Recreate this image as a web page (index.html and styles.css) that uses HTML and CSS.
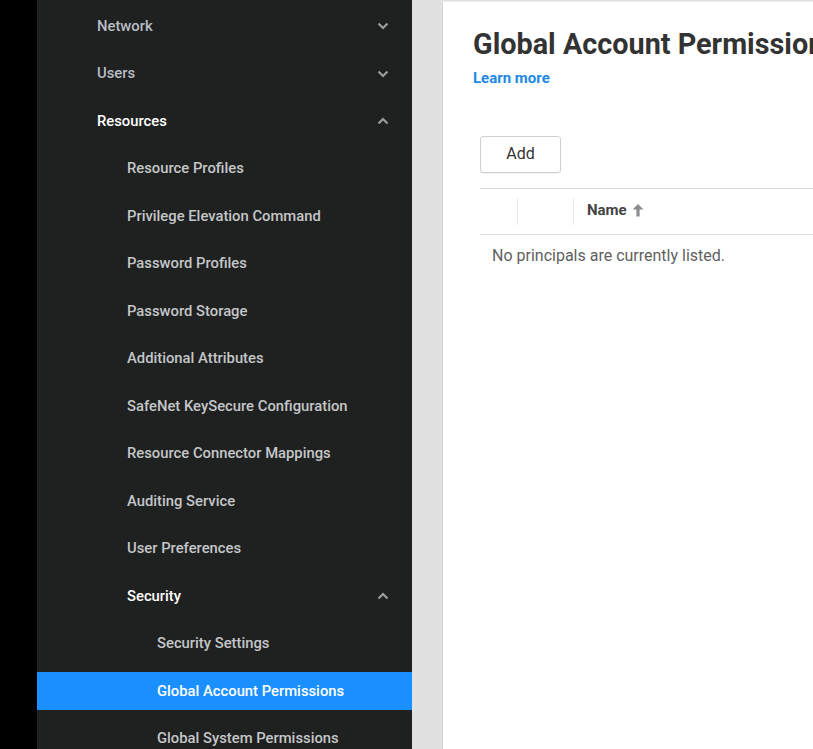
FILE: index.html
```html
<!DOCTYPE html>
<html>
<head>
<meta charset="utf-8">
<link rel="stylesheet" href="styles.css">
</head>
<body>
<div class="app">
  <div class="edge"></div>
  <nav class="sidebar">
    <div class="item l1"><span>Network</span><svg class="chev" viewBox="0 0 12 8"><path d="M1.5 1.5 L6 6 L10.5 1.5"/></svg></div>
    <div class="item l1"><span>Users</span><svg class="chev" viewBox="0 0 12 8"><path d="M1.5 1.5 L6 6 L10.5 1.5"/></svg></div>
    <div class="item l1 open"><span>Resources</span><svg class="chev" viewBox="0 0 12 8"><path d="M1.5 6.5 L6 2 L10.5 6.5"/></svg></div>
    <div class="item l2"><span>Resource Profiles</span></div>
    <div class="item l2"><span>Privilege Elevation Command</span></div>
    <div class="item l2"><span>Password Profiles</span></div>
    <div class="item l2"><span>Password Storage</span></div>
    <div class="item l2"><span>Additional Attributes</span></div>
    <div class="item l2"><span>SafeNet KeySecure Configuration</span></div>
    <div class="item l2"><span>Resource Connector Mappings</span></div>
    <div class="item l2"><span>Auditing Service</span></div>
    <div class="item l2"><span>User Preferences</span></div>
    <div class="item l2 open"><span>Security</span><svg class="chev" viewBox="0 0 12 8"><path d="M1.5 6.5 L6 2 L10.5 6.5"/></svg></div>
    <div class="item l3"><span>Security Settings</span></div>
    <div class="item l3 active"><span>Global Account Permissions</span></div>
    <div class="item l3"><span>Global System Permissions</span></div>
  </nav>
  <main class="gutter">
    <section class="panel">
      <h1 class="title">Global Account Permissions</h1>
      <a class="learn" href="#">Learn more</a>
      <div class="toolbar"><button class="btn">Add</button></div>
      <div class="table">
        <div class="thead">
          <div class="cell c1"></div>
          <div class="cell c2"></div>
          <div class="cell c3">Name <svg class="sort" viewBox="0 0 12 14"><path d="M6 1 L11.5 6.5 H7.6 V13.5 H4.4 V6.5 H0.5 Z"/></svg></div>
        </div>
        <div class="empty">No principals are currently listed.</div>
      </div>
    </section>
  </main>
</div>
</body>
</html>
```

FILE: styles.css
```css
html, body {
  margin: 0;
  padding: 0;
  height: 100%;
  overflow: hidden;
}
body {
  font-family: Roboto, "Liberation Sans", sans-serif;
  background: #000;
}
.app {
  display: flex;
  height: 749px;
  width: 813px;
  overflow: hidden;
}
.edge {
  width: 37px;
  flex: none;
  background: #000;
}
.sidebar {
  width: 375px;
  flex: none;
  background: #1f2020;
  display: flex;
  flex-direction: column;
  gap: 9.5px;
  padding-top: 7px;
  box-sizing: border-box;
}
.item {
  height: 38px;
  flex: none;
  display: flex;
  align-items: center;
  justify-content: space-between;
  padding-right: 23px;
  font-size: 14.8px;
  font-weight: 500;
  color: #c4c6c8;
  box-sizing: border-box;
}
.item span { line-height: 1; }
.l1 { padding-left: 60px; color: #b8bec4; }
.l2 { padding-left: 90px; }
.l3 { padding-left: 120px; }
.item.open { color: #ffffff; }
.item.active {
  background: #1a8fff;
  color: #ffffff;
}
.chev {
  width: 12px;
  height: 8px;
  fill: none;
  stroke: #9a9c9e;
  stroke-width: 2.2;
}
.gutter {
  flex: 1;
  background: #e1e1e1;
  padding: 1px 0 0 30px;
  min-width: 0;
}
.panel {
  background: #fff;
  height: 100%;
  border-left: 1px solid #d6d6d6;
  border-top: 1px solid #ececec;
  padding: 0 0 0 30px;
  box-sizing: border-box;
  width: 600px;
}
.title {
  margin: 0;
  padding-top: 26px;
  font-size: 28.8px;
  font-weight: 700;
  color: #333333;
  white-space: nowrap;
  line-height: 32px;
}
.learn {
  display: inline-block;
  margin-top: 10px;
  font-size: 15px;
  font-weight: 700;
  color: #1e88e5;
  text-decoration: none;
  line-height: 17px;
}
.toolbar {
  padding: 49px 0 0 7px;
}
.btn {
  width: 81px;
  height: 37px;
  border: 1px solid #cfcfcf;
  border-radius: 3px;
  background: #fff;
  font-family: Roboto, "Liberation Sans", sans-serif;
  font-size: 16px;
  color: #333;
  padding: 0 0 3px 0;
  box-shadow: 0 1px 1px rgba(0,0,0,0.05);
}
.table {
  margin: 15px 0 0 7px;
  border-top: 1px solid #dcdcdc;
}
.thead {
  display: flex;
  height: 45px;
  align-items: center;
  border-bottom: 1px solid #dcdcdc;
}
.cell { height: 27px; box-sizing: border-box; }
.c1 { width: 38px; border-right: 1px solid #e8e8e8; }
.c2 { width: 56px; border-right: 1px solid #e8e8e8; }
.c3 {
  padding-left: 13px;
  padding-bottom: 4px;
  display: flex;
  align-items: center;
  font-size: 15px;
  font-weight: 700;
  color: #444;
}
.sort {
  width: 12px;
  height: 14px;
  fill: #8c8c8c;
  margin-left: 5px;
  margin-top: 1px;
}
.empty {
  padding: 11px 0 0 12px;
  font-size: 16px;
  color: #5f5f5f;
}
```
